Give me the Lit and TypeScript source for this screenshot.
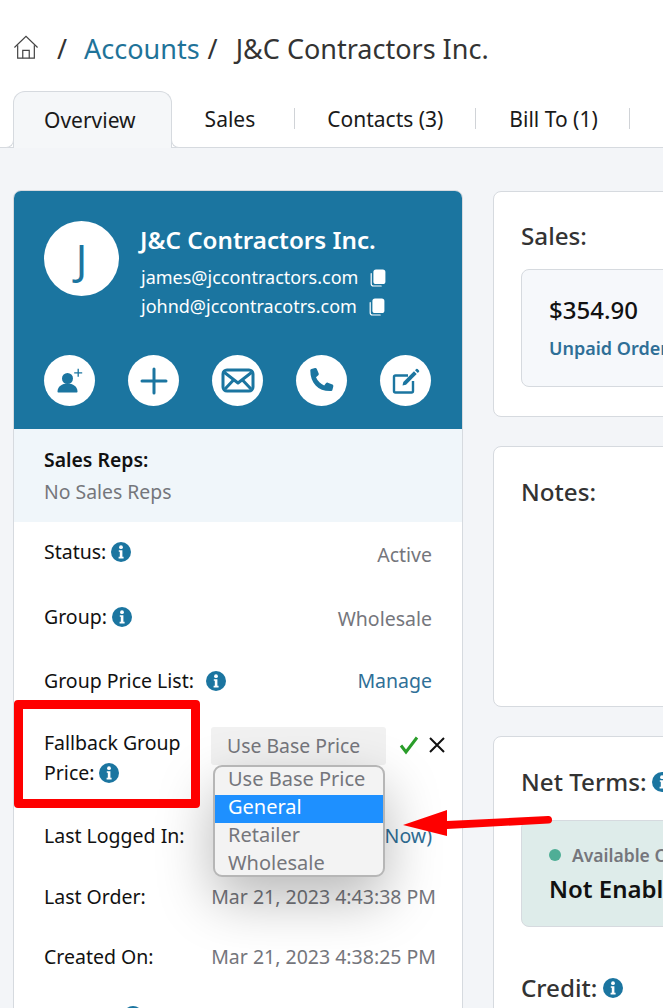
import { LitElement, html, css, svg } from "lit";
import { customElement } from "lit/decorators.js";

const info = html`<svg class="info" viewBox="0 0 20 20"><circle cx="10" cy="10" r="10" fill="#1b75a0"/><circle cx="10" cy="5.2" r="1.9" fill="#fff"/><path d="M7.8 8.2h3.6v6.6h1.2v1.6H7.6v-1.6h1.2v-5H7.8z" fill="#fff"/></svg>`;
const copy = html`<svg class="copy" viewBox="0 0 16 18"><path d="M1.2 4.5v10.3c0 1.3 1 2.2 2.2 2.2h7.8" fill="none" stroke="#fff" stroke-width="1.2" stroke-linecap="round"/><rect x="3.4" y="0.5" width="12" height="14.5" rx="2.6" fill="#fff"/></svg>`;

@customElement("app-root")
export class AppRoot extends LitElement {
  static styles = css`
    :host { display: block; width: 663px; height: 1008px; overflow: hidden; position: relative; background: #fff; font-family: "Noto Sans", sans-serif; color: #111; }
    * { box-sizing: border-box; }
    .crumbs { height: 91px; padding: 6px 0 0 13px; display: flex; align-items: center; font-size: 27px; color: #333; white-space: nowrap; }
    .home { width: 26px; height: 25px; margin-right: 18px; margin-top: -2px; flex: none; }
    .crumbs a { color: #1f7399; margin: 0 8px 0 17px; }
    .crumbs .cur { margin-left: 18px; }
    .tabs { height: 57px; display: flex; border-bottom: 1px solid #d6dadf; white-space: nowrap; font-size: 21px; padding-left: 13px; width: 800px; }
    .tab { height: 56px; display: flex; align-items: center; padding: 0 32px 0 33px; position: relative; color: #1a1a1a; }
    .tab.sep::after { content: ""; position: absolute; right: 0; top: 17px; height: 21px; width: 1px; background: #d0d3d7; }
    .tab.first { padding: 0 35px 1px 30px; height: 57px; background: #f5f7f9; border: 1px solid #d6dadf; border-bottom: 0; border-radius: 12px 12px 0 0; }
    .tab.first::before, .tab.first::after { content: ""; position: absolute; bottom: 0; width: 8px; height: 8px; background: #fff; }
    .tab.first::before { left: -9px; border-right: 1px solid #d6dadf; border-bottom: 1px solid #d6dadf; border-radius: 0 0 8px 0; }
    .tab.first::after { right: -9px; border-left: 1px solid #d6dadf; border-bottom: 1px solid #d6dadf; border-radius: 0 0 0 8px; }
    .tab.wide { padding-right: 40px; }
    .tab.contacts { padding: 0 33px 0 32px; }
    .tab.orange { color: #e08a1e; }
    .main { background: #f3f5f8; padding: 42px 0 0 13px; display: grid; grid-template-columns: 450px 300px; gap: 30px; height: 860px; align-items: start; }
    .right { margin-top: 1px; }
    .left { background: #fff; border: 1px solid #d6dadf; border-radius: 8px; overflow: hidden; height: 900px; }
    .head { background: #1b75a0; height: 238px; padding: 30px 30px 0; color: #fff; }
    .who { display: flex; gap: 21px; }
    .avatar { width: 75px; height: 75px; flex: none; border-radius: 50%; background: #fff; color: #1b75a0; display: flex; align-items: center; justify-content: center; font-size: 42px; }
    .name { font-size: 24.2px; font-weight: 600; line-height: 32px; margin-top: 3px; white-space: nowrap; }
    .mail { font-size: 18px; line-height: 29px; display: flex; align-items: center; gap: 12px; white-space: nowrap; padding-left: 1px; }
    .name + .mail { margin-top: 7px; }
    .copy { width: 16px; height: 18px; }
    .acts { display: flex; gap: 33px; margin-top: 34px; }
    .act { width: 51px; height: 51px; border-radius: 50%; background: #fff; display: flex; align-items: center; justify-content: center; }
    .act svg { width: 34px; height: 34px; }
    .reps { background: #f0f6fa; height: 93px; padding: 15px 30px 0; font-size: 19.4px; line-height: 32px; }
    .reps b { font-weight: 600; display: block; color: #111; }
    .reps span, .val { color: #75767c; }
    .rows { padding: 0 30px; font-size: 19.5px; line-height: 26px; position: relative; }
    .row { display: flex; justify-content: space-between; align-items: flex-start; white-space: nowrap; }
    .lab { display: flex; align-items: center; gap: 5px; }
    .info { width: 20px; height: 20px; flex: none; }
    .val.link { color: #2f6f97; }
    .r1 { height: 64px; padding-top: 17px; }
    .r1 .val { margin-top: 3px; }
    .r2 { height: 64px; padding-top: 18px; }
    .r2 .val { margin-top: 2px; }
    .r3 { height: 52px; padding-top: 18px; }
    .r3 .lab { gap: 12px; }
    .r4 { height: 108px; padding-top: 26px; display: block; }
    .r4 .l { line-height: 30px; }
    .r5 { height: 60px; padding-top: 13px; }
    .r6 { height: 60px; padding-top: 14px; }
    .r6 .val, .r7 .val { margin-right: -4px; }
    .r7 { height: 50px; padding-top: 14px; }
    .r8 { padding: 26px 0 0 79px; }
    .editor { position: absolute; left: 211px; top: 727px; width: 236px; }
    .sel { width: 175px; height: 38px; background: #f1f1f1; border-radius: 3px; font-size: 19.4px; color: #75767c; padding: 5px 0 0 16px; white-space: nowrap; }
    .ok { position: absolute; left: 188px; top: 8px; width: 20px; height: 20px; }
    .no { position: absolute; left: 217px; top: 9px; width: 18px; height: 18px; }
    .drop { position: absolute; left: 2px; top: 38px; width: 172px; height: 112px; border: 2px solid #b6b6b6; border-radius: 9px; background: #f3f3f3; overflow: hidden; font-size: 20px; color: #75767c; box-shadow: 0 22px 55px rgba(0,0,0,.28); }
    .opt { height: 28px; line-height: 24px; padding-left: 13px; white-space: nowrap; }
    .opt.on { background: #1e90ff; color: #fff; }
    .redbox { position: absolute; left: 14px; top: 700px; width: 186px; height: 108px; border: 9px solid #fe0000; border-radius: 4px; }
    .arrow { position: absolute; left: 400px; top: 805px; width: 156px; height: 36px; }
    .card { background: #fff; border: 1px solid #d6dadf; border-radius: 8px; padding: 27px 27px 0; margin-bottom: 29px; }
    .card h3 { margin: 0; font-size: 24.2px; font-weight: 500; line-height: 34px; color: #333; display: flex; align-items: center; gap: 6px; white-space: nowrap; }
    .c1 { height: 226px; }
    .c2 { height: 261px; padding-top: 28px; }
    .c3 { height: 400px; padding-top: 28px; }
    .box { border: 1px solid #d6dadf; border-radius: 8px; background: #f6f8fb; margin-top: 16px; width: 300px; padding: 23px 27px; white-space: nowrap; }
    .c1 .box { height: 118px; }
    .amt { font-size: 24px; font-weight: 500; line-height: 34px; color: #111; }
    .unp { font-size: 18px; font-weight: 600; color: #2f6f97; margin-top: 8px; line-height: 26px; }
    .c3 .box { height: 107px; background: #deecea; margin-top: 21px; padding: 21px 27px; }
    .av { display: flex; align-items: center; gap: 11px; font-size: 17.5px; font-weight: 600; color: #75767c; line-height: 26px; }
    .dot { width: 12px; height: 12px; border-radius: 50%; background: #4fae96; }
    .ne { font-size: 24px; font-weight: 600; color: #111; line-height: 34px; margin-top: 4px; }
    .c3 h3.cr { margin-top: 44px; }
  `;

  render() {
    return html`
      <div class="crumbs">
        <svg class="home" viewBox="0 0 27 27" fill="none" stroke="#444" stroke-width="1.3"><path d="M1 13.5 13.5 1.5 26 13.5"/><path d="M4.5 11v14h18V11"/><path d="M10 25v-8.5h7V25"/></svg>
        <span>/</span><a>Accounts</a><span>/</span><span class="cur">J&amp;C Contractors Inc.</span>
      </div>
      <div class="tabs">
        <div class="tab first">Overview</div>
        <div class="tab sep wide">Sales</div>
        <div class="tab sep contacts">Contacts (3)</div>
        <div class="tab sep">Bill To (1)</div>
        <div class="tab orange">Sales</div>
      </div>
      <div class="main">
        <div class="left">
          <div class="head">
            <div class="who">
              <div class="avatar">J</div>
              <div>
                <div class="name">J&amp;C Contractors Inc.</div>
                <div class="mail">james@jccontractors.com ${copy}</div>
                <div class="mail">johnd@jccontracotrs.com ${copy}</div>
              </div>
            </div>
            <div class="acts">
              <div class="act"><svg viewBox="0 0 34 34" fill="#1b75a0"><circle cx="14.500" cy="14.500" r="5.500"/><path d="M4.500 27.500c0-5 4.500-8 10-8s10 3 10 8c0 .6-.4 1-1 1h-18c-.6 0-1-.4-1-1z"/><path d="M25.200 4.800v8M21.200 8.800h8" stroke="#1b75a0" stroke-width="1.300" fill="none"/></svg></div>
              <div class="act"><svg viewBox="0 0 34 34" fill="none" stroke="#1b75a0" stroke-width="3" stroke-linecap="round"><path d="M17 5v24M5 17h24"/></svg></div>
              <div class="act"><svg viewBox="0 0 34 34" fill="none" stroke="#1b75a0" stroke-width="3" stroke-linejoin="round"><rect x="2" y="6" width="30" height="21" rx="4"/><path d="M3.500 8.500 17 19 30.500 8.500M4 25l9-9.500M30 25l-9-9.500"/></svg></div>
              <div class="act"><svg viewBox="0 0 34 34" fill="#1b75a0"><path d="M6.500 5 10 4.100c.8-.2 1.500.2 1.800.9l1.900 4.600c.2.600.1 1.300-.4 1.700l-2.300 1.900c1.700 3.700 4.700 6.700 8.200 8.200l1.900-2.300c.4-.5 1.100-.7 1.700-.4l4.600 1.900c.7.300 1.100 1 .9 1.800l-.9 3.500c-.2.700-.8 1.200-1.500 1.200C13.500 27.500 5.300 19.300 5.300 6.500c0-.7.500-1.300 1.200-1.500z"/></svg></div>
              <div class="act"><svg viewBox="0 0 34 34" fill="none" stroke="#1b75a0" stroke-width="2.400"><path d="M24 17v10a1.500 1.500 0 0 1-1.500 1.500h-16A1.500 1.500 0 0 1 5 27V13a1.500 1.500 0 0 1 1.500-1.500H19"/><path d="M13.500 21.500l.8-3.500L25 7.300l2.700 2.700L17 20.700z" fill="#1b75a0" stroke="none"/><path d="M26 6.200l1.200-1.200a1 1 0 0 1 1.400 0l1.400 1.400a1 1 0 0 1 0 1.400L28.800 9z" fill="#1b75a0" stroke="none"/></svg></div>
            </div>
          </div>
          <div class="reps"><b>Sales Reps:</b><span>No Sales Reps</span></div>
          <div class="rows">
            <div class="row r1"><div class="lab">Status: ${info}</div><div class="val">Active</div></div>
            <div class="row r2"><div class="lab">Group: ${info}</div><div class="val">Wholesale</div></div>
            <div class="row r3"><div class="lab">Group Price List: ${info}</div><div class="val link">Manage</div></div>
            <div class="row r4"><div class="l">Fallback Group</div><div class="l lab">Price: ${info}</div></div>
            <div class="row r5"><div>Last Logged In:</div><div class="val link">(Now)</div></div>
            <div class="row r6"><div>Last Order:</div><div class="val">Mar 21, 2023 4:43:38 PM</div></div>
            <div class="row r7"><div>Created On:</div><div class="val">Mar 21, 2023 4:38:25 PM</div></div>
            <div class="row r8"><div class="lab">${info}</div></div>
          </div>
        </div>
        <div class="right">
          <div class="card c1"><h3>Sales:</h3><div class="box"><div class="amt">$354.90</div><div class="unp">Unpaid Orders</div></div></div>
          <div class="card c2"><h3>Notes:</h3></div>
          <div class="card c3">
            <h3>Net Terms: ${info}</h3>
            <div class="box"><div class="av"><span class="dot"></span>Available Credit</div><div class="ne">Not Enabled</div></div>
            <h3 class="cr">Credit: ${info}</h3>
          </div>
        </div>
      </div>
      <div class="editor">
        <div class="sel">Use Base Price</div>
        <svg class="ok" viewBox="0 0 20 20" fill="none" stroke="#2a9d2a" stroke-width="3"><path d="M2 10.500l5 6.500L18 2.500"/></svg>
        <svg class="no" viewBox="0 0 18 18" fill="none" stroke="#111" stroke-width="2"><path d="M2 2l14 14M16 2 2 16"/></svg>
        <div class="drop">
          <div class="opt">Use Base Price</div>
          <div class="opt on">General</div>
          <div class="opt">Retailer</div>
          <div class="opt">Wholesale</div>
        </div>
      </div>
      <div class="redbox"></div>
      <svg class="arrow" viewBox="0 0 156 36">${svg`<path d="M3 20 47 5 V16 L148 11 a3.500 3.500 0 0 1 .5 7.500 L47 24 V31z" fill="#fe0000"/>`}</svg>
    `;
  }
}
